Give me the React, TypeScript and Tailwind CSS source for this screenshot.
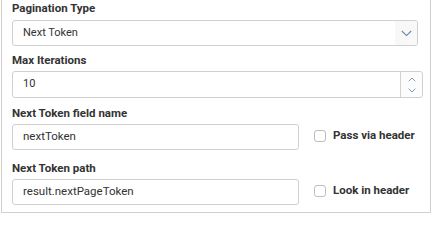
import React from "react";

const font = { fontFamily: "Roboto, 'Liberation Sans', sans-serif" };

function Checkbox({ label }: { label: string }) {
  return (
    <label className="flex items-center gap-[7px] ml-[15px] -mt-[2px]">
      <span className="block w-[12px] h-[12px] rounded-[3px] border border-[#bdbdbd] bg-white" />
      <span className="text-[11.5px] font-bold text-[#333333]">{label}</span>
    </label>
  );
}

export default function App() {
  return (
    <div className="w-[432px] h-[216px] bg-white" style={font}>
      <div className="ml-[1px] w-[430px] border border-t-0 border-[#cfcfcf] pl-[10px] pb-[7px] text-[#333333]">
        <div className="h-[16px] leading-[16px] text-[11.5px] font-bold">Pagination Type</div>
        <div className="mt-[4px] w-[406px] h-[26px] flex items-stretch border border-[#d0d0d0] rounded-[3px]">
          <div className="flex-1 flex items-center pl-[10px] text-[11px]">Next Token</div>
          <div className="w-[22px] flex items-center justify-center bg-[#f8f8f8] rounded-r-[3px]">
            <svg width="11" height="7" viewBox="0 0 11 7" fill="none">
              <path d="M0.8 1 L5.5 5.6 L10.2 1" stroke="#6883a6" strokeWidth="1.1" />
            </svg>
          </div>
        </div>
        <div className="mt-[6px] h-[16px] leading-[16px] text-[11.5px] font-bold">Max Iterations</div>
        <div className="mt-[3px] w-[411px] h-[27px] flex items-stretch border border-[#d0d0d0] rounded-[3px]">
          <div className="flex-1 flex items-center pl-[10px] text-[11px]">10</div>
          <div className="w-[22px] border-l border-[#d0d0d0] flex flex-col items-center justify-center gap-[6px] bg-[#fcfcfc] rounded-r-[3px]">
            <svg width="8" height="5" viewBox="0 0 8 5" fill="none">
              <path d="M0.7 4.3 L4 1 L7.3 4.3" stroke="#7f97b6" strokeWidth="1" />
            </svg>
            <svg width="8" height="5" viewBox="0 0 8 5" fill="none">
              <path d="M0.7 0.7 L4 4 L7.3 0.7" stroke="#7f97b6" strokeWidth="1" />
            </svg>
          </div>
        </div>
        <div className="mt-[7px] h-[16px] leading-[16px] text-[11.5px] font-bold">Next Token field name</div>
        <div className="mt-[3px] flex items-center">
          <div className="w-[287px] h-[26px] flex items-center pl-[10px] text-[11.5px] border border-[#d0d0d0] rounded-[3px]">nextToken</div>
          <Checkbox label="Pass via header" />
        </div>
        <div className="mt-[10px] h-[16px] leading-[16px] text-[11.5px] font-bold">Next Token path</div>
        <div className="mt-[3px] flex items-center">
          <div className="w-[287px] h-[26px] flex items-center pl-[10px] text-[11.5px] border border-[#d0d0d0] rounded-[3px]">result.nextPageToken</div>
          <Checkbox label="Look in header" />
        </div>
      </div>
    </div>
  );
}
